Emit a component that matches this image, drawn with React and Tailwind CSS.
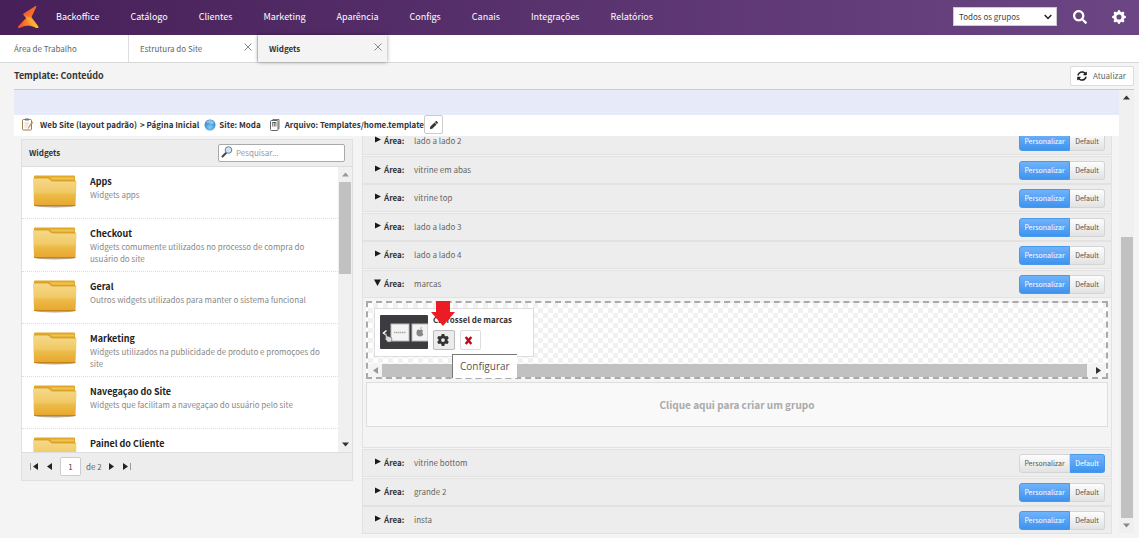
import React, { useState } from "react";
import { FaSearch, FaSyncAlt, FaPen } from "react-icons/fa";
import { FaGear } from "react-icons/fa6";
import { BsGearFill } from "react-icons/bs";

const menu = [
  "Backoffice",
  "Catálogo",
  "Clientes",
  "Marketing",
  "Aparência",
  "Configs",
  "Canais",
  "Integrações",
  "Relatórios",
];

const widgets = [
  { nome: "Apps", descricao: "Widgets apps" },
  {
    nome: "Checkout",
    descricao: "Widgets comumente utilizados no processo de compra do usuário do site",
  },
  {
    nome: "Geral",
    descricao: "Outros widgets utilizados para manter o sistema funcional",
  },
  {
    nome: "Marketing",
    descricao: "Widgets utilizados na publicidade de produto e promoçoes do site",
  },
  {
    nome: "Navegaçao do Site",
    descricao: "Widgets que facilitam a navegaçao do usuário pelo site",
  },
  { nome: "Painel do Cliente" },
];

const areasTopo = [
  { nome: "lado a lado 2" },
  { nome: "vitrine em abas" },
  { nome: "vitrine top" },
  { nome: "lado a lado 3" },
  { nome: "lado a lado 4" },
  { nome: "marcas", aberta: true },
];

const areasBase = [
  { nome: "vitrine bottom", modo: "default" },
  { nome: "grande 2" },
  { nome: "insta" },
];

function Logo() {
  return (
    <svg viewBox="0 0 22 24" className="h-6 w-[22px]">
      <defs>
        <linearGradient id="logoA" x1="0" y1="0" x2="1" y2="1">
          <stop offset="0" stopColor="#f0402c" />
          <stop offset="1" stopColor="#fb8a2b" />
        </linearGradient>
        <linearGradient id="logoB" x1="0" y1="0" x2="1" y2="0">
          <stop offset="0" stopColor="#f4402c" />
          <stop offset="0.500" stopColor="#fb8a2b" />
          <stop offset="1" stopColor="#fdc436" />
        </linearGradient>
      </defs>
      <path d="M18.500 1Q19.800 0.500 19.300 2L14.500 12 10 13.500 6.500 10Q5.500 9 7 8.300Z" fill="url(#logoA)" />
      <path d="M10 12L14 11.500 21.300 21.500Q22 23.500 19.500 23 15 20.500 11 20.500T2.500 23Q0 23.500 1 21.500Z" fill="url(#logoB)" />
      <path d="M6.500 10L13.500 13 21.300 21.500Q22 23.500 19.500 23 13 19 10 14Z" fill="#fdb534" opacity="0.500" />
    </svg>
  );
}

function Pasta() {
  return (
    <svg viewBox="0 0 44 33" className="h-[33px] w-11 shrink-0">
      <defs>
        <linearGradient id="pasta" x1="0" y1="0" x2="0" y2="1">
          <stop offset="0" stopColor="#f5d98a" />
          <stop offset="0.500" stopColor="#f1ca66" />
          <stop offset="0.600" stopColor="#ecbb48" />
          <stop offset="1" stopColor="#e8a62c" />
        </linearGradient>
      </defs>
      <ellipse cx="22" cy="31" rx="20" ry="1.500" fill="#8a6a3a" opacity="0.600" />
      <path d="M2 0.500H41Q42 0.500 42 1.500V8H1V1.500Q1 0.500 2 0.500Z" fill="#e2a826" />
      <path d="M17 2.500H41V4.500H19Z" fill="#efc355" />
      <path d="M0 4Q0 3 1 3H14Q16 3 17 4.500T20 6H42.500Q43.500 6 43.500 7L42.500 30Q42.500 31 41.500 31H2Q1 31 1 30Z" fill="url(#pasta)" />
      <path d="M1 3H14Q16 3 17 4.500T20 6H43" fill="none" stroke="#cf951c" strokeWidth="0.700" />
      <path d="M1 30.500H42.500" stroke="#b87a18" strokeWidth="0.800" />
    </svg>
  );
}

function Seta({ className, d }) {
  return (
    <svg viewBox="0 0 7 7" className={className} fill="currentColor">
      <path d={d} />
    </svg>
  );
}

const CIMA = "M0 5.500L3.500 1.500 7 5.500Z";
const BAIXO = "M0 1.500L3.500 5.500 7 1.500Z";
const ESQUERDA = "M6 0L1 3.500 6 7Z";
const DIREITA = "M1 0L6 3.500 1 7Z";

function Aba({ titulo, ativa, fecha }) {
  return (
    <div
      className={
        ativa
          ? "relative flex w-[129px] items-center bg-[#f4f4f4] pl-[11px] font-bold text-[#333] shadow-[0_0_4px_rgba(0,0,0,0.4)]"
          : "relative flex w-[129px] items-center border-r border-[#ddd] pl-[11px] text-[#666] first:pl-[14px]"
      }
    >
      <a href="#">{titulo}</a>
      {fecha && (
        <button type="button" aria-label="Fechar" className="absolute top-2 right-[5px]">
          <svg viewBox="0 0 8 8" className="size-2" stroke="#888" strokeWidth="1">
            <path d="M0.500 0.500L7.500 7.500M7.500 0.500L0.500 7.500" />
          </svg>
        </button>
      )}
    </div>
  );
}

function Area({ nome, aberta, modo = "personalizar" }) {
  const [atual, setAtual] = useState(modo);
  const azul = "border-[#4a98e8] bg-linear-to-b from-[#6fb2fb] to-[#3e93ee] text-white";
  const cinza = "border-[#d4d4d4] bg-linear-to-b from-[#fdfdfd] to-[#e2e2e2] text-[#555]";
  return (
    <div className="flex h-7 shrink-0 items-center border border-[#e2e2e2] bg-[#ededed] pr-[6px] pl-[11px] odd:mb-px">
      <Seta
        className="mb-1 h-[7px] w-[7px] text-[#1a1a1a]"
        d={aberta ? "M0 0.500H7L3.500 7Z" : "M1 0.500L7 3.500 1 6.500Z"}
      />
      <b className="ml-[3px] w-[30px] text-[#333]">Área:</b>
      <span className="text-[#666]">{nome}</span>
      <div className="ml-auto flex h-[19px] text-[7px] leading-4">
        <button
          type="button"
          onClick={() => setAtual("personalizar")}
          className={`w-[51px] rounded-l-[3px] border ${atual === "personalizar" ? azul : cinza}`}
        >
          Personalizar
        </button>
        <button
          type="button"
          onClick={() => setAtual("default")}
          className={`w-[35px] rounded-r-[3px] border border-l-0 ${atual === "default" ? azul : cinza}`}
        >
          Default
        </button>
      </div>
    </div>
  );
}

function Cabecalho() {
  return (
    <header className="flex h-[35px] shrink-0 items-center bg-linear-to-r from-[#472059] to-[#6c4684] pr-[13px] pb-[2px] pl-[17px] text-white">
      <Logo />
      <nav className="ml-[17px] flex gap-[31px] text-[9px]">
        {menu.map((m) => (
          <a key={m} href="#">
            {m}
          </a>
        ))}
      </nav>
      <div className="relative ml-auto">
        <select
          aria-label="Grupo"
          className="block h-[19px] w-[104px] appearance-none border border-[#ccc] bg-white pl-[5px] text-[8px] text-[#444]"
        >
          <option>Todos os grupos</option>
        </select>
        <svg
          viewBox="0 0 8 6"
          className="pointer-events-none absolute top-[7px] right-[5px] h-[6px] w-2"
          fill="none"
          stroke="#222"
          strokeWidth="1.500"
        >
          <path d="M0.700 1L4 4.500 7.300 1" />
        </svg>
      </div>
      <button type="button" aria-label="Buscar" className="ml-4">
        <FaSearch className="size-[14px]" />
      </button>
      <button type="button" aria-label="Configurações" className="ml-[25px]">
        <BsGearFill className="size-[14px]" />
      </button>
    </header>
  );
}

function Trilha() {
  return (
    <div className="flex h-[21px] shrink-0 items-center bg-white pb-[2px] pl-2 text-[8px] font-bold text-[#333]">
      <svg viewBox="0 0 12 13" className="h-[13px] w-3">
        <rect x="0.500" y="1.500" width="9" height="10.500" rx="1" fill="#fff" stroke="#a27b4b" />
        <path d="M3 0.500H7V2.500H3Z" fill="#777" />
        <path d="M2.500 5H7M2.500 7H6M2.500 9H5" stroke="#bbb" strokeWidth="0.700" />
        <path d="M11 4.500L7 9.500 6 10.500 6.500 9 10 4Z" fill="#e8a33a" stroke="#9a6a2a" strokeWidth="0.400" />
      </svg>
      <span className="ml-[6px]">Web Site (layout padrão)</span>
      <span className="ml-[3px]">&gt; Página Inicial</span>
      <svg viewBox="0 0 12 12" className="ml-[5px] size-3">
        <defs>
          <radialGradient id="globo" cx="0.500" cy="0.700" r="0.700">
            <stop offset="0" stopColor="#7fd0fa" />
            <stop offset="1" stopColor="#2474bd" />
          </radialGradient>
        </defs>
        <circle cx="6" cy="6" r="5.500" fill="url(#globo)" />
        <path d="M1.500 4Q3 1 6 1T10.500 4Q8 5.500 6 4.500T1.500 4Z" fill="#a9d8f5" opacity="0.700" />
      </svg>
      <span className="ml-[3px]">Site: Moda</span>
      <svg viewBox="0 0 10 12" className="ml-[9px] h-3 w-[10px]" fill="none" stroke="#555">
        <path d="M2.500 0.500H9V10" strokeWidth="0.800" />
        <rect x="0.500" y="1.500" width="7.500" height="10" rx="1" fill="#fff" strokeWidth="0.900" />
        <path d="M2.700 3.500V7.500M4.300 3.500V7.500M5.900 3.500V7.500M2.300 3.500H6.300" strokeWidth="0.700" stroke="#333" />
      </svg>
      <span className="ml-[5px]">Arquivo: Templates/home.template</span>
      <button
        type="button"
        aria-label="Editar"
        className="flex h-[19px] w-[19px] items-center justify-center rounded-[2px] border border-[#ccc] bg-white"
      >
        <FaPen className="size-2" />
      </button>
    </div>
  );
}

function PainelWidgets() {
  const [pagina, setPagina] = useState("1");
  return (
    <aside className="mt-[3px] ml-[7px] flex h-[342px] w-[332px] shrink-0 flex-col border border-[#e0e0e0] bg-white">
      <div className="flex h-[27px] shrink-0 items-center justify-between border-b border-[#ddd] bg-[#ededed] px-[7px]">
        <h2 className="text-[8px] font-bold">Widgets</h2>
        <label className="flex h-[18px] w-[127px] items-center rounded-[2px] border border-[#aaa] bg-white pl-[2px]">
          <svg viewBox="0 0 12 12" className="mb-[2px] size-3">
            <path d="M5 7L1.500 10.500" stroke="#444" strokeWidth="2" strokeLinecap="round" />
            <circle cx="7.500" cy="4" r="3.300" fill="#cfe6f7" stroke="#6d7f90" />
          </svg>
          <input
            type="text"
            aria-label="Pesquisar"
            placeholder="Pesquisar..."
            className="ml-[3px] w-[90px] text-[8px] outline-none placeholder:text-[#999]"
          />
        </label>
      </div>
      <div className="flex min-h-0 flex-1">
        <ul className="min-w-0 flex-1 overflow-hidden">
          {widgets.map((w) => (
            <li
              key={w.nome}
              className="flex min-h-[52px] items-start border-b border-dotted border-[#ddd] pt-2 pb-[6px] pl-[11px]"
            >
              <Pasta />
              <div className="ml-[13px] flex-1 pr-2">
                <h3 className="text-[9px] leading-[14px] font-bold text-[#222]">{w.nome}</h3>
                {w.descricao && (
                  <p className="text-[8px] leading-3 text-[#888]">{w.descricao}</p>
                )}
              </div>
            </li>
          ))}
        </ul>
        <div className="flex w-[14px] flex-col items-center bg-[#f0f0f0]">
          <Seta className="my-1 size-[7px] text-[#999]" d={CIMA} />
          <div className="h-[92px] w-3 bg-[#c1c1c1]" />
          <Seta className="mt-auto mb-1 size-[7px] text-[#333]" d={BAIXO} />
        </div>
      </div>
      <div className="flex h-7 shrink-0 items-center border-t border-[#ddd] bg-[#ededed] pl-2 text-[8px] text-[#666]">
        <button type="button" aria-label="Primeira página" className="flex text-[#222]">
          <i className="mr-px w-px bg-[#999]" />
          <Seta className="size-[7px]" d={ESQUERDA} />
        </button>
        <button type="button" aria-label="Página anterior" className="ml-[7px] text-[#222]">
          <Seta className="size-[7px]" d={ESQUERDA} />
        </button>
        <input
          type="text"
          aria-label="Página"
          value={pagina}
          onChange={(e) => setPagina(e.target.value)}
          className="ml-[7px] h-[19px] w-[21px] rounded-[2px] border border-[#ccc] bg-white text-center text-[#444]"
        />
        <span className="ml-[5px]">de 2</span>
        <button type="button" aria-label="Próxima página" className="ml-[6px] text-[#222]">
          <Seta className="size-[7px]" d={DIREITA} />
        </button>
        <button type="button" aria-label="Última página" className="ml-[7px] flex text-[#222]">
          <Seta className="size-[7px]" d={DIREITA} />
          <i className="ml-px w-px bg-[#999]" />
        </button>
      </div>
    </aside>
  );
}

function CartaoMarcas() {
  return (
    <div className="mt-[5px] ml-[6px] flex h-[49px] w-[160px] border border-[#ddd] bg-white pt-[6px] pl-[5px]">
      <svg viewBox="0 0 48 34" className="h-[34px] w-12 shrink-0">
        <rect width="48" height="34" rx="1" fill="#3b3b40" />
        <rect x="11" y="9" width="18" height="17" fill="#f3f3f3" stroke="#bbb" />
        <path d="M14 17.500H26" stroke="#aaa" strokeWidth="1.500" strokeDasharray="1.500 0.500" />
        <rect x="32" y="9" width="16" height="17" fill="#f3f3f3" stroke="#bbb" />
        <path d="M40 15Q37 13.500 36.500 17T39 21.500Q40 21 41 21.500 43 20.500 43.500 19 41.500 18 43 15.500 41.500 14 40 15ZM40 14Q40 12.500 42 12 42 13.500 40 14Z" fill="#888" />
        <path d="M6.500 15.500L3.500 18 6.500 20.500" fill="none" stroke="#fff" strokeWidth="1.500" />
        <path d="M5 18.500Q6.500 17.500 7 21L11.500 22.500Q12.500 25 11 27H7.500L4.500 23 6 23.500Z" fill="#ddd" stroke="#555" strokeWidth="0.500" />
      </svg>
      <div className="ml-[5px]">
        <h4 className="text-[8px] leading-[9px] font-bold text-[#333]">Carrossel de marcas</h4>
        <div className="mt-[6px] flex gap-[5px]">
          <div className="relative">
            <button
              type="button"
              aria-label="Configurar"
              className="flex h-5 w-[22px] items-center rounded-[2px] border border-[#bbb] bg-[#ececec] pl-[3px] text-[#333]"
            >
              <FaGear className="size-3" />
            </button>
            <svg viewBox="0 0 24 25" className="absolute -top-[29px] -left-[2px] h-[25px] w-6">
              <path d="M5 0H19V11H24L12 25 0 11H5Z" fill="#ed1c24" />
            </svg>
            <span
              role="tooltip"
              className="absolute top-6 left-[19px] z-10 h-6 border-t border-l border-[#777] bg-white px-[7px] font-['Open_Sans',sans-serif] text-[10px] leading-[22px] text-[#555]"
            >
              Configurar
            </span>
          </div>
          <button
            type="button"
            aria-label="Remover"
            className="flex h-5 w-[21px] items-center rounded-[2px] border border-[#ddd] bg-white pl-[3px]"
          >
            <svg viewBox="0 0 9 9" className="size-[9px]" stroke="#b80d18" strokeWidth="2.400">
              <path d="M1.700 1L7.300 8M7.300 1L1.700 8" />
            </svg>
          </button>
        </div>
      </div>
    </div>
  );
}

export default function App() {
  return (
    <div className="flex h-screen flex-col overflow-hidden bg-[#f4f4f4] font-['Noto_Sans_CJK_JP',sans-serif] text-[#333]">
      <Cabecalho />
      <div className="flex h-7 shrink-0 border-b border-[#d8d8d8] bg-white text-[8px]">
        <Aba titulo="Área de Trabalho" />
        <Aba titulo="Estrutura do Site" fecha />
        <Aba titulo="Widgets" ativa fecha />
      </div>
      <div className="flex h-[26px] shrink-0 items-center justify-between pr-[5px] pl-[14px]">
        <h1 className="text-[9px] font-bold">Template: Conteúdo</h1>
        <button
          type="button"
          className="flex h-5 w-16 items-center gap-[6px] rounded-[2px] border border-[#ddd] bg-white pl-[6px] text-[8px] text-[#666]"
        >
          <FaSyncAlt className="size-[10px] shrink-0 text-[#222]" />
          Atualizar
        </button>
      </div>

      <div className="mr-[5px] ml-[14px] flex min-h-0 flex-1 border-t border-[#ccc]">
        <main className="flex min-w-0 flex-1 flex-col">
          <div className="h-[25px] shrink-0 bg-[#e6eaf9]" />
          <Trilha />
          <div className="flex min-h-0 flex-1 overflow-hidden">
            <PainelWidgets />
            <section className="-mt-[9px] mr-[7px] ml-[9px] flex min-w-0 flex-1 flex-col text-[8px]">
              <div className="flex flex-col">
                {areasTopo.map((a) => (
                  <Area key={a.nome} {...a} />
                ))}
              </div>
              <div className="mb-px border border-t-0 border-[#e2e2e2] px-[3px] pt-[3px] pb-5">
                <div className="flex h-[78px] flex-col border-2 border-dashed border-[#aaa] bg-white bg-[repeating-conic-gradient(#f1f1f1_0_25%,#ffffff_0_50%)] bg-[length:10px_10px]">
                  <CartaoMarcas />
                  <div className="mt-auto flex h-[13px] items-center justify-between bg-[#f4f4f4] px-1">
                    <Seta className="size-[7px] text-[#999]" d={ESQUERDA} />
                    <div className="mr-2 ml-[3px] h-full flex-1 bg-[#c1c1c1]" />
                    <Seta className="size-[7px] text-[#333]" d={DIREITA} />
                  </div>
                </div>
                <button
                  type="button"
                  className="mt-[3px] block h-[45px] w-full border border-[#ddd] bg-[#f9f9f9] text-[10px] font-bold text-[#aaa]"
                >
                  Clique aqui para criar um grupo
                </button>
              </div>
              <div className="flex flex-col">
                {areasBase.map((a) => (
                  <Area key={a.nome} {...a} />
                ))}
              </div>
            </section>
          </div>
        </main>
        <div className="mb-[5px] flex w-[15px] flex-col items-center bg-[#f0f0f0]">
          <Seta className="mt-1 size-[7px] text-[#333]" d={CIMA} />
          <div className="mt-[136px] w-3 flex-1 bg-[#c1c1c1]" />
          <Seta className="my-1 size-[7px] text-[#888]" d={BAIXO} />
        </div>
      </div>
    </div>
  );
}
